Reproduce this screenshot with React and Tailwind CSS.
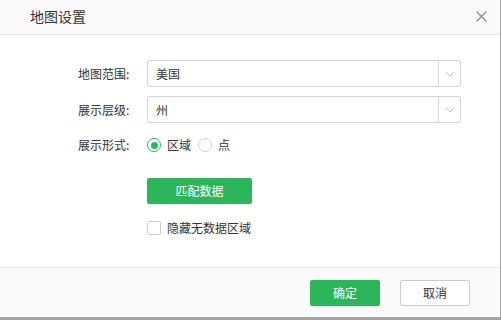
import React from 'react';

const Chevron = () => (
  <svg width="10" height="6" viewBox="0 0 10 6" fill="none">
    <path d="M1 1l4 4 4-4" stroke="#c4c4c4" strokeWidth="1" />
  </svg>
);

const Select = ({ value }) => (
  <div className="flex h-[27px] w-[314px] items-center rounded-[2px] border border-[#d4d4d4] bg-white">
    <span className="flex-1 pl-[8px] text-[12px] text-[#333]">{value}</span>
    <div className="flex h-full w-[22px] items-center justify-center border-l border-[#d4d4d4]">
      <Chevron />
    </div>
  </div>
);

const Row = ({ label, children }) => (
  <div className="flex items-center">
    <span className="w-[69px] text-[12px] text-[#333]">{label}</span>
    {children}
  </div>
);

const App = () => {
  return (
    <div
      className="h-[320px] w-[501px] bg-[#a3a3a3]"
      style={{ fontFamily: '"Noto Sans CJK SC", "Liberation Sans", sans-serif' }}
    >
      <div className="flex h-[317px] w-[500px] flex-col bg-white">
        <div className="flex h-[35px] items-center justify-between border-b border-[#e6e6e6] bg-[#fafafa] pb-[2px] pl-[30px] pr-[13px]">
          <span className="text-[14px] text-[#333]">地图设置</span>
          <svg width="11" height="11" viewBox="0 0 11 11">
            <path d="M0.5 0.5l10 10M10.5 0.5l-10 10" stroke="#888" strokeWidth="1.1" />
          </svg>
        </div>

        <div className="flex flex-1 flex-col pl-[78px] pt-[25px]">
          <div className="flex flex-col gap-[9px]">
            <Row label="地图范围:">
              <Select value="美国" />
            </Row>
            <Row label="展示层级:">
              <Select value="州" />
            </Row>
          </div>

          <div className="mt-[13px]">
            <Row label="展示形式:">
              <label className="flex items-center gap-[6px]">
                <span className="flex h-[14px] w-[14px] items-center justify-center rounded-full border border-[#2bb65a]">
                  <span className="h-[7px] w-[7px] rounded-full bg-[#2bb65a]" />
                </span>
                <span className="text-[12px] text-[#333]">区域</span>
              </label>
              <label className="ml-[7px] flex items-center gap-[6px]">
                <span className="h-[14px] w-[14px] rounded-full border border-[#cfcfcf]" />
                <span className="text-[12px] text-[#333]">点</span>
              </label>
            </Row>
          </div>

          <button className="ml-[69px] mt-[24px] h-[26px] w-[105px] rounded-[2px] bg-[#2bb65a] text-[12px] text-white">
            匹配数据
          </button>

          <label className="ml-[69px] mt-[15px] flex items-center gap-[6px]">
            <span className="h-[14px] w-[14px] rounded-[2px] border border-[#cfcfcf] bg-white" />
            <span className="text-[12px] text-[#333]">隐藏无数据区域</span>
          </label>
        </div>

        <div className="flex h-[50px] items-center justify-end gap-[20px] border-t border-[#e6e6e6] bg-[#fafafa] pr-[30px]">
          <button className="h-[26px] w-[70px] rounded-[2px] bg-[#2bb65a] text-[12px] text-white">确定</button>
          <button className="h-[26px] w-[70px] rounded-[2px] border border-[#cccccc] bg-white text-[12px] text-[#333]">
            取消
          </button>
        </div>
      </div>
    </div>
  );
};

export default App;
